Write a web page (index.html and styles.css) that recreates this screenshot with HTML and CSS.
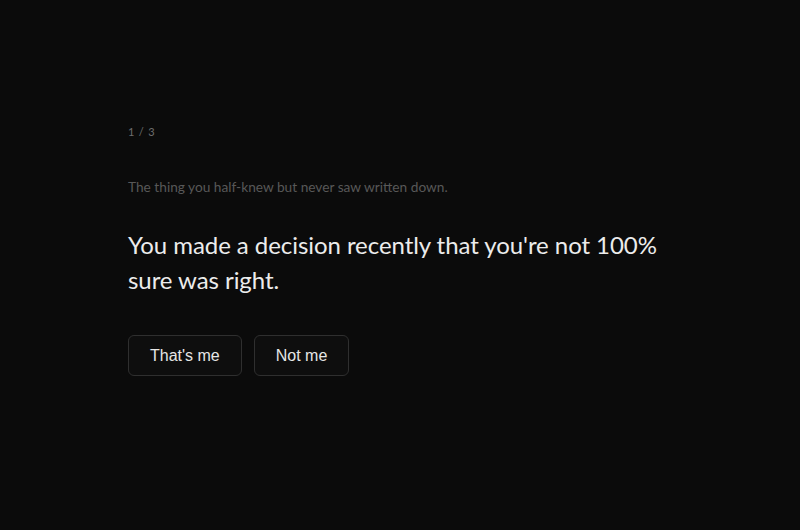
FILE: index.html
```html
<!DOCTYPE html>
<html lang="en">
<head>
<meta charset="utf-8">
<title>Quiz</title>
<link rel="stylesheet" href="styles.css">
</head>
<body>
<main class="card">
  <div class="counter">1 / 3</div>
  <p class="lead">The thing you half-knew but never saw written down.</p>
  <h1 class="statement">You made a decision recently that you're not 100% sure was right.</h1>
  <div class="actions">
    <button class="btn">That's me</button>
    <button class="btn">Not me</button>
  </div>
</main>
</body>
</html>
```
FILE: styles.css
```css
html, body {
  margin: 0;
  height: 100%;
  background: #0b0b0b;
}
body {
  font-family: "Lato", "Noto Sans", sans-serif;
  color: #e8e8e8;
}
.card {
  padding: 124px 128px 0 128px;
  display: flex;
  flex-direction: column;
  align-items: flex-start;
}
.counter {
  font-size: 11px;
  line-height: 16px;
  color: #6e6e6e;
  letter-spacing: 0.8px;
}
.lead {
  margin: 38px 0 0 0;
  font-size: 13.7px;
  line-height: 18px;
  color: #585858;
}
.statement {
  margin: 31px 0 0 0;
  font-size: 24px;
  line-height: 35px;
  font-weight: 400;
  letter-spacing: -0.06px;
  color: #ececec;
  max-width: 544px;
}
.actions {
  margin-top: 38px;
  display: flex;
  gap: 12px;
}
.btn {
  font-family: "Liberation Sans", Arial, sans-serif;
  font-size: 16px;
  color: #e6e6e6;
  background: #0e0e0e;
  border: 1px solid #2f2f2f;
  border-radius: 6px;
  height: 41px;
  padding: 0 21px;
  cursor: pointer;
}
```
